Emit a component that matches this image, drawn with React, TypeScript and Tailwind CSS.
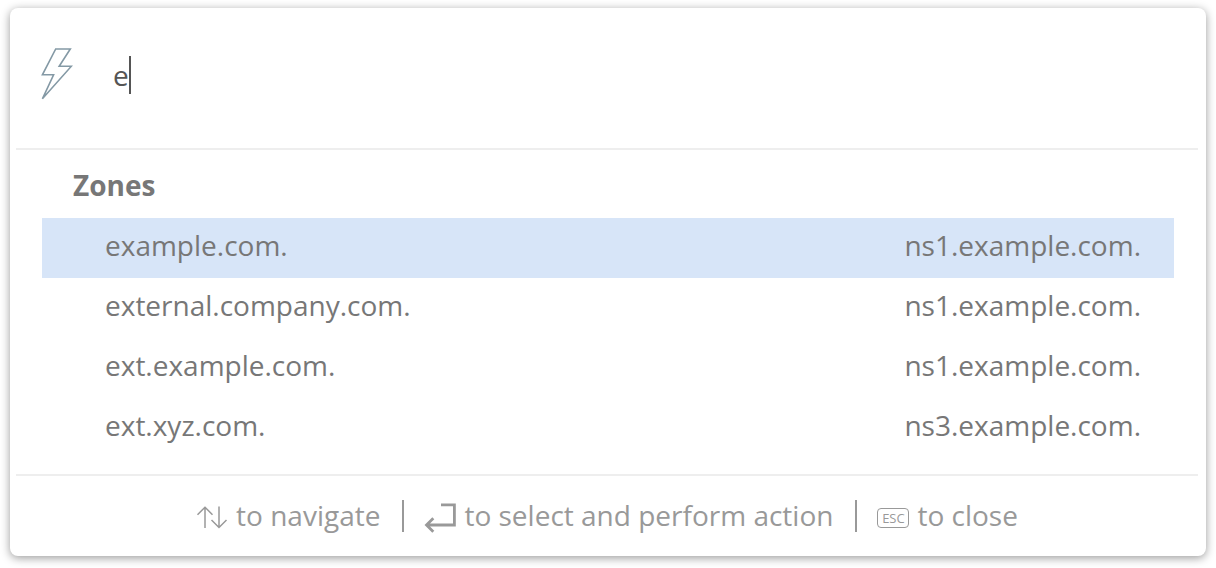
import { useState } from "react";

type Zone = { name: string; server: string };

const zones: Zone[] = [
  { name: "example.com.", server: "ns1.example.com." },
  { name: "external.company.com.", server: "ns1.example.com." },
  { name: "ext.example.com.", server: "ns1.example.com." },
  { name: "ext.xyz.com.", server: "ns3.example.com." },
];

function BoltIcon() {
  return (
    <svg className="mb-0.5 h-13 w-8 shrink-0" viewBox="0 0 32 52" fill="none" stroke="#8499a5" strokeWidth="1.6" aria-hidden="true">
      <path d="M14.7 1H29.3L18.2 18.2H30.4L1.4 50.8L12.6 26.8H1.4Z" />
    </svg>
  );
}

function ArrowsIcon() {
  return (
    <svg className="mt-1 h-6 w-8" viewBox="0 0 32 24" fill="none" stroke="currentColor" strokeWidth="1.5" aria-hidden="true">
      <path d="M9 23V2M1.5 9.7L9 2.2L16.5 9.7M23 1.5V22M15.5 15L23 22.5L30.5 15" />
    </svg>
  );
}

function ReturnIcon() {
  return (
    <svg className="mt-1 h-8 w-8" viewBox="0 0 32 32" fill="none" stroke="currentColor" strokeWidth="2.8" aria-hidden="true">
      <path d="M17 3.8H30.4V24H3M9.3 17.2L2.5 24L9.3 30.8" />
    </svg>
  );
}

function Separator() {
  return <span className="ml-0.5 h-8 w-0.5 bg-[#999]" />;
}

export default function App() {
  const [query, setQuery] = useState("e");
  const [selected, setSelected] = useState(0);

  return (
    <main className="bg-white px-2.5 pt-2 pb-3 font-['Open_Sans',sans-serif] text-[28px] leading-[38px] text-[#777]">
      <section className="rounded-lg bg-white pr-2 pl-1.5 shadow-[0_2px_10px_rgba(0,0,0,0.4)]">
        <label className="flex h-[140px] items-center gap-10 pr-6 pb-1.5 pl-[25px]">
          <BoltIcon />
          <span className="flex min-w-0 items-center text-[#555]">
            <input
              aria-label="Search"
              className="field-sizing-content min-w-0 bg-transparent caret-transparent outline-none"
              value={query}
              onChange={(event) => setQuery(event.target.value)}
            />
            <span className="h-[38px] w-0.5 bg-[#555]" />
          </span>
        </label>

        <div className="border-y-2 border-[#eee] pt-4 pr-6 pb-4 pl-6.5">
          <h2 className="pb-3.5 pl-[31px] font-bold">Zones</h2>
          <ul>
            {zones.map((zone, index) => (
              <li key={zone.name}>
                <button
                  type="button"
                  onClick={() => setSelected(index)}
                  className={`flex h-[60px] w-full items-center justify-between pr-[33px] pb-1.5 pl-[63px] ${
                    index === selected ? "bg-[#d7e5f8]" : "bg-white"
                  }`}
                >
                  <span>{zone.name}</span>
                  <span>{zone.server}</span>
                </button>
              </li>
            ))}
          </ul>
        </div>

        <footer className="flex h-20 items-center justify-center gap-5 text-[#999]">
          <span className="flex items-center gap-2 pb-0.5">
            <ArrowsIcon />
            <span>to navigate</span>
          </span>
          <Separator />
          <span className="flex items-center gap-2 pb-0.5">
            <ReturnIcon />
            <span>to select and perform action</span>
          </span>
          <Separator />
          <span className="flex items-center gap-2 pb-0.5">
            <kbd className="mt-1.5 flex h-5 w-8 items-center justify-center rounded-sm border border-[#999] font-['Open_Sans',sans-serif] text-[13px] leading-4">
              ESC
            </kbd>
            <span>to close</span>
          </span>
        </footer>
      </section>
    </main>
  );
}
